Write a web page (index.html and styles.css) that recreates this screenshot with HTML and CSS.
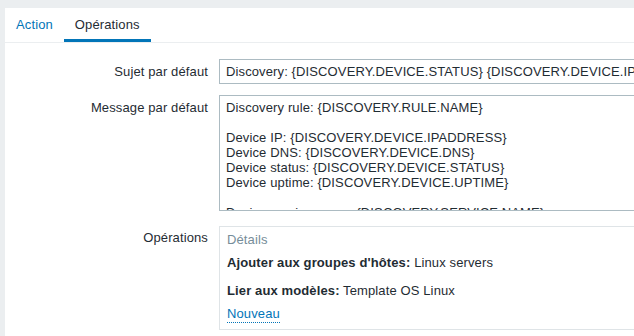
FILE: index.html
```html
<!DOCTYPE html>
<html lang="fr">
<head>
  <meta charset="UTF-8" />
  <title>Action - Opérations</title>
  <link rel="stylesheet" href="styles.css">
</head>
<body>
  <div class="panel">
    <ul class="tabs">
      <li class="tab"><a href="#">Action</a></li>
      <li class="tab active">Opérations</li>
    </ul>

    <div class="form">
      <label class="label">Sujet par défaut</label>
      <div class="field">
        <input type="text" class="input" value="Discovery: {DISCOVERY.DEVICE.STATUS} {DISCOVERY.DEVICE.IPADDRESS}" />
      </div>

      <label class="label">Message par défaut</label>
      <div class="field">
        <textarea class="input textarea">Discovery rule: {DISCOVERY.RULE.NAME}

Device IP: {DISCOVERY.DEVICE.IPADDRESS}
Device DNS: {DISCOVERY.DEVICE.DNS}
Device status: {DISCOVERY.DEVICE.STATUS}
Device uptime: {DISCOVERY.DEVICE.UPTIME}

Device service name: {DISCOVERY.SERVICE.NAME}
Device service port: {DISCOVERY.SERVICE.PORT}</textarea>
      </div>

      <label class="label label-ops">Opérations</label>
      <div class="field field-ops">
        <div class="ops">
          <div class="ops-head">Détails</div>
          <div class="ops-row"><strong>Ajouter aux groupes d'hôtes:</strong> Linux servers</div>
          <div class="ops-row"><strong>Lier aux modèles:</strong> Template OS Linux</div>
          <a href="#" class="link-new">Nouveau</a>
        </div>
      </div>
    </div>
  </div>
</body>
</html>
```

FILE: styles.css
```css
html, body { margin: 0; height: 100%; overflow: hidden; }
body { background: #ebeef0; font-family: "Liberation Sans", Arial, sans-serif; font-size: 13px; line-height: 16px; letter-spacing: 0.12px; color: #1f2c33; }

.panel { box-sizing: border-box; margin: 0 0 0 5px; padding-top: 8px; height: 100%; overflow: hidden; background: linear-gradient(#ebeef0, #ebeef0) top / 100% 8px no-repeat, #fff; }

.tabs { display: flex; list-style: none; margin: 0; padding: 0; border-bottom: 1px solid #ebeef0; }
.tab { padding: 9px 11px 6px; border-bottom: 3px solid transparent; }
.tab a { color: #0275b8; text-decoration: none; }
.tab.active { border-bottom-color: #0275b8; }

.form { display: grid; grid-template-columns: 203px 1fr; column-gap: 11px; row-gap: 11px; padding-top: 16px; }
.label { text-align: right; padding-top: 5px; }
.label-ops { padding-top: 4px; }
.field { min-width: 0; }
.field-ops, .label-ops { margin-top: 4px; }

.input { box-sizing: border-box; display: block; width: 480px; height: 25px; margin: 0; padding: 4px 6px; border: 1px solid #acbbc2; font: inherit; letter-spacing: inherit; color: #1f2c33; background: #fff; outline: none; }
.textarea { height: 116px; line-height: 15px; resize: none; overflow: hidden; }

.ops { width: 480px; box-sizing: border-box; border: 1px solid #dfe4e7; padding: 5px 7px 6px; }
.ops-head { color: #768d99; margin-bottom: 7px; }
.ops-row { margin-bottom: 12px; }
.ops-row:last-of-type { margin-bottom: 7px; }
.link-new { display: inline-block; color: #0275b8; text-decoration: none; border-bottom: 1px dotted #0275b8; }
```
